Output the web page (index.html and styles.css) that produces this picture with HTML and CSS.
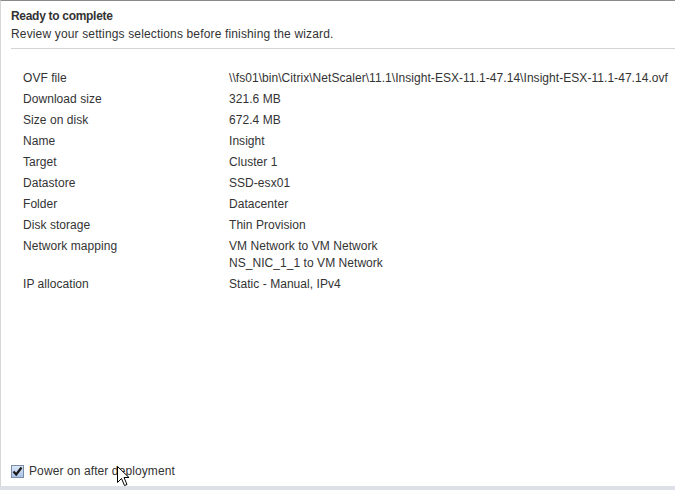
FILE: index.html
```html
<!DOCTYPE html>
<html lang="en">
<head>
  <meta charset="UTF-8">
  <title>Ready to complete</title>
  <link rel="stylesheet" href="styles.css">
</head>
<body>
  <div class="wizard">
    <div class="header">
      <div class="title">Ready to complete</div>
      <div class="subtitle">Review your settings selections before finishing the wizard.</div>
    </div>
    <table class="summary">
      <tr><td class="label">OVF file</td><td>\\fs01\bin\Citrix\NetScaler\11.1\Insight-ESX-11.1-47.14\Insight-ESX-11.1-47.14.ovf</td></tr>
      <tr><td class="label">Download size</td><td>321.6 MB</td></tr>
      <tr><td class="label">Size on disk</td><td>672.4 MB</td></tr>
      <tr><td class="label">Name</td><td>Insight</td></tr>
      <tr><td class="label">Target</td><td>Cluster 1</td></tr>
      <tr><td class="label">Datastore</td><td>SSD-esx01</td></tr>
      <tr><td class="label">Folder</td><td>Datacenter</td></tr>
      <tr><td class="label">Disk storage</td><td>Thin Provision</td></tr>
      <tr><td class="label">Network mapping</td><td>VM Network to VM Network<br>NS_NIC_1_1 to VM Network</td></tr>
      <tr><td class="label">IP allocation</td><td>Static - Manual, IPv4</td></tr>
    </table>
    <div class="footer">
      <label class="power">
        <span class="checkbox">
          <svg width="11" height="11" viewBox="0 0 11 11"><path d="M1.5 5.5 L4.2 8.5 L9.5 1.5" fill="none" stroke="#1a1a1a" stroke-width="2.2"/></svg>
        </span>
        Power on after deployment
      </label>
      <svg class="cursor" width="13" height="21" viewBox="0 0 13 21">
        <path d="M0.5 0.5 L0.5 16.5 L4.5 12.5 L7.5 19.5 L10 18.5 L7 11.5 L12 11.5 Z" fill="#fff" stroke="#000" stroke-width="1"/>
      </svg>
    </div>
  </div>
  <div class="bottom-strip"></div>
</body>
</html>
```

FILE: styles.css
```css
body { margin: 0; font-family: "Liberation Sans", Arial, sans-serif; font-size: 12px; color: #333; background-color: #fff; }
.wizard { height: 485px; border-top: 1px solid #8a8a8a; border-left: 1px solid #d6d6d6; display: flex; flex-direction: column; position: relative; }
.header { margin-left: 10px; padding-top: 7px; padding-bottom: 5px; border-bottom: 1px solid #d4d4d4; }
.title { font-weight: bold; line-height: 17px; color: #333; letter-spacing: -0.3px; }
.subtitle { line-height: 17px; margin-top: 1px; color: #333; letter-spacing: 0.15px; }
.summary { border-collapse: collapse; margin-top: 19px; margin-left: 22px; letter-spacing: 0.05px; }
.summary td { padding: 2px 0; line-height: 17px; vertical-align: top; white-space: nowrap; }
.summary td.label { width: 206px; }
.footer { margin-top: auto; padding: 0 0 6px 10px; position: relative; }
.power { display: flex; align-items: center; gap: 5px; line-height: 17px; letter-spacing: 0.1px; }
.checkbox { width: 11px; height: 11px; border: 1px solid #7a8ca8; background: linear-gradient(#dbe7f7, #a9c2e6); display: flex; align-items: center; justify-content: center; }
.cursor { position: absolute; left: 116px; top: 3px; }
.bottom-strip { height: 4px; background-color: #dde1e7; }
```
